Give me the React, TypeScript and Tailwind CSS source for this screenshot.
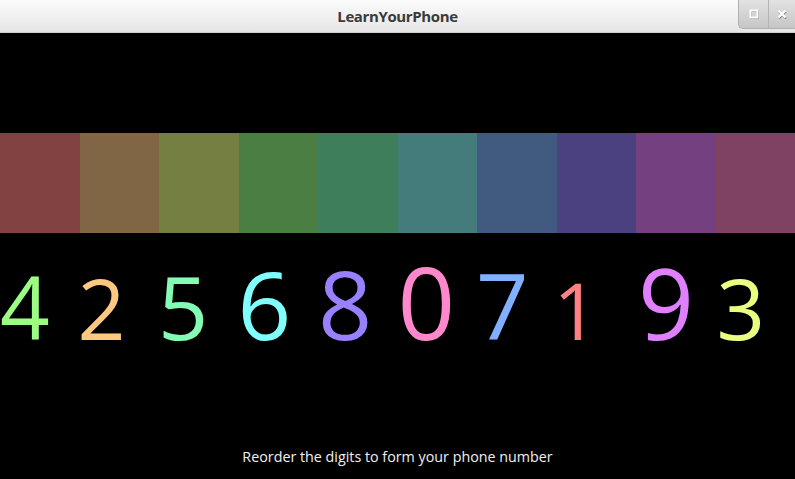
const bars = [
  "bg-[#824242]",
  "bg-[#806644]",
  "bg-[#767f42]",
  "bg-[#4a7e42]",
  "bg-[#3e7e5a]",
  "bg-[#447c7c]",
  "bg-[#415a80]",
  "bg-[#4b4080]",
  "bg-[#744080]",
  "bg-[#804262]",
];

// each digit: its value, size and colour, plus a nudge inside its column
const digits = [
  { d: "4", cls: "text-[87px] text-[#9cfd84] ml-0" },
  { d: "2", cls: "text-[84px] text-[#ffc880] ml-[-2px]" },
  { d: "5", cls: "text-[88px] text-[#84fcb4] ml-[-1px]" },
  { d: "6", cls: "text-[94px] text-[#80ffff] ml-[-1px]" },
  { d: "8", cls: "text-[95px] text-[#9980ff] ml-0" },
  { d: "0", cls: "text-[101px] text-[#ff88cc] ml-0" },
  { d: "7", cls: "text-[92px] text-[#80b0ff] ml-[-1px]" },
  { d: "1", cls: "text-[78px] text-[#ff8080] ml-[-3px]" },
  { d: "9", cls: "text-[98px] text-[#e080ff] ml-[2px]" },
  { d: "3", cls: "text-[85px] text-[#e8ff80] ml-[1px]" },
];

function TitleBar() {
  return (
    <div className="relative h-[33px] bg-gradient-to-b from-[#fbfbfb] to-[#e6e6e6] border-b border-[#cfcfcf] flex items-center justify-center">
      <span className="font-['Open_Sans',sans-serif] font-bold text-[15px] text-[#3a3a3a] tracking-tight">
        LearnYourPhone
      </span>
      {/* window buttons */}
      <div className="absolute right-0 top-0 h-[29px] w-[57px] flex rounded-bl-[5px] overflow-hidden border-l border-b border-[#b0b0b0] bg-gradient-to-b from-[#e2e2e2] to-[#c6c6c6]">
        <div className="w-[30px] h-full flex items-center justify-center border-r border-[#b4b4b4]">
          <svg width="10" height="10" viewBox="0 0 10 10">
            <rect x="2" y="2" width="7" height="7" fill="none" stroke="#888" strokeWidth="2" />
            <rect x="1.5" y="1.5" width="7" height="7" fill="none" stroke="#fff" strokeWidth="2" />
          </svg>
        </div>
        <div className="flex-1 h-full flex items-center justify-center">
          <svg width="11" height="11" viewBox="0 0 11 11">
            <path d="M2 2.5 L9 9.5 M9 2.5 L2 9.5" stroke="#888" strokeWidth="2" />
            <path d="M1.5 1.5 L8.5 8.5 M8.5 1.5 L1.5 8.5" stroke="#fff" strokeWidth="2" />
          </svg>
        </div>
      </div>
    </div>
  );
}

export default function App() {
  return (
    <div className="w-[795px] h-[479px] flex flex-col bg-black overflow-hidden">
      <TitleBar />
      <div className="flex-1 flex flex-col font-['Open_Sans',sans-serif]">
        <div className="mt-[100px] h-[100px] flex">
          {bars.map((c) => (
            <div key={c} className={`flex-1 ${c}`} />
          ))}
        </div>

        <div className="mt-[18px] flex items-baseline">
          {digits.map((x) => (
            <div key={x.d} className="flex-1 flex">
              <span className={`w-[44px] text-center leading-none ${x.cls}`}>{x.d}</span>
            </div>
          ))}
        </div>

        <div className="flex-1" />
        <p className="pb-[12px] text-center text-[14.3px] leading-[20px] text-[#f0f0f0]">
          Reorder the digits to form your phone number
        </p>
      </div>
    </div>
  );
}
